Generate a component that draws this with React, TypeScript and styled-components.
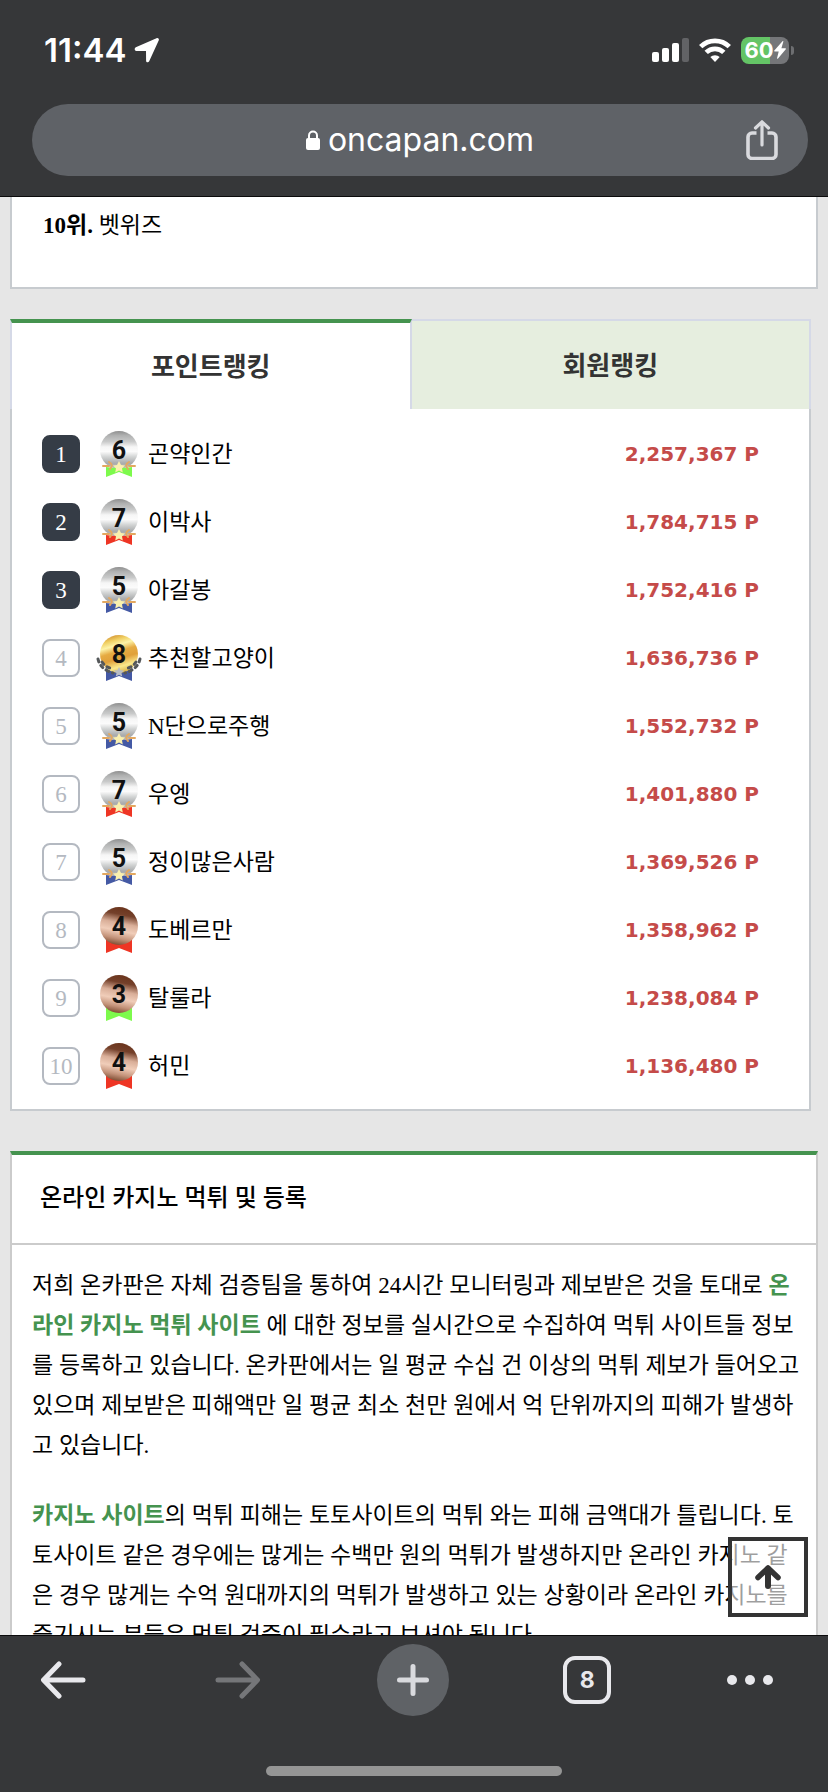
import React, { useState } from 'react';
import styled, { createGlobalStyle, css } from 'styled-components';

const serif = '"Liberation Serif", "Noto Sans CJK KR", serif';
const system = 'Inter, "Noto Sans CJK KR", sans-serif';

const GlobalStyle = createGlobalStyle`
  * { box-sizing: border-box; }
  body { margin: 0; background: #e6e6e6; color: #000; font-family: ${serif}; }
  button { border: 0; margin: 0; padding: 0; background: none; font: inherit; color: inherit; cursor: pointer; }
  h2, p, ol { margin: 0; padding: 0; }
  svg { display: block; flex: none; }
`;

const Screen = styled.div`
  display: flex;
  flex-direction: column;
  height: 100vh;
  overflow: hidden;
`;

const Header = styled.header`
  flex: none;
  background: #363739;
  border-bottom: 1px solid #0b0b0c;
  padding-bottom: 20px;
  color: #fff;
  font-family: ${system};
`;

const StatusBar = styled.div`
  display: flex;
  align-items: center;
  height: 104px;
  padding: 0 34px 4px 44px;
`;

const Clock = styled.time`
  font-size: 33px;
  font-weight: 600;
  line-height: 40px;
  margin-right: 8px;
`;

const StatusIcons = styled.div`
  display: flex;
  align-items: center;
  gap: 10px;
  margin-left: auto;
`;

const Battery = styled.div`
  display: flex;
  align-items: center;
  gap: 2px;
`;

const BatteryBody = styled.div`
  display: flex;
  align-items: center;
  justify-content: center;
  width: 48px;
  height: 27px;
  border-radius: 8px;
  background: linear-gradient(to right, #64c466 60%, #757679 60%);
  font-size: 22px;
  font-weight: 700;
  line-height: 27px;
`;

const BatteryCap = styled.div`
  width: 3px;
  height: 9px;
  border-radius: 0 4px 4px 0;
  background: #6d6e71;
`;

const AddressBar = styled.div`
  display: grid;
  grid-template-columns: 1fr auto 1fr;
  align-items: center;
  height: 72px;
  margin: 0 20px 0 32px;
  padding: 0 30px;
  border-radius: 36px;
  background: #5f6267;
`;

const Address = styled.button`
  grid-column: 2;
  display: flex;
  align-items: center;
  gap: 8px;
  font-size: 32px;
  line-height: 40px;
`;

const ShareButton = styled.button`
  justify-self: end;
`;

const Main = styled.main`
  position: relative;
  flex: 1;
  min-height: 0;
  overflow: hidden;
  padding: 0 10px;
`;

const SiteCard = styled.section`
  border: 2px solid #c7cbcf;
  border-top: 0;
  background: #fff;
  padding: 9px 32px 41px 31px;
  font-size: 23px;
  line-height: 40px;
`;

const Ranking = styled.section`
  margin: 30px 7px 40px 0;
`;

const TabList = styled.div`
  display: flex;
  height: 90px;
`;

const Tab = styled.button<{ $active: boolean }>`
  flex: 1;
  padding-bottom: 4px;
  border: 2px solid #d5d9e7;
  border-bottom: 0;
  font-size: 26px;
  font-weight: 700;
  color: #333;
  background: #e6eedf;
  ${({ $active }) =>
    $active
      ? css`
          background: #fff;
          border-top: 4px solid #45934f;
        `
      : css`
          border-left: 0;
        `}
`;

const RankList = styled.ol`
  list-style: none;
  border: 2px solid #c7cbcf;
  border-top: 0;
  background: #fff;
  padding: 11px 50px 9px 30px;
`;

const RankRow = styled.li`
  display: flex;
  align-items: center;
  height: 68px;
`;

const RankBadge = styled.span<{ $top: boolean }>`
  width: 38px;
  height: 38px;
  border-radius: 8px;
  border: 2px solid ${({ $top }) => ($top ? '#353c46' : '#b4b9c1')};
  background: ${({ $top }) => ($top ? '#353c46' : '#fff')};
  color: ${({ $top }) => ($top ? '#fff' : '#b4b9c1')};
  font-size: 23px;
  line-height: 36px;
  text-align: center;
  margin-right: 16px;
`;

const Member = styled.span`
  margin-left: 6px;
  padding-top: 2px;
  font-size: 23px;
  line-height: 40px;
`;

const Points = styled.span`
  margin-left: auto;
  color: #c54b49;
  font-family: "DejaVu Sans", sans-serif;
  font-size: 20px;
  font-weight: 700;
`;

const Article = styled.section`
  border: 2px solid #cbcbcb;
  border-top: 4px solid #45934f;
  background: #fff;
`;

const ArticleTitle = styled.h2`
  padding: 0 28px 2px;
  border-bottom: 2px solid #cbcbcb;
  font-size: 24px;
  font-weight: 500;
  line-height: 86px;
`;

const ArticleBody = styled.div`
  display: flex;
  flex-direction: column;
  gap: 30px;
  padding: 21px 16px 30px 20px;
  font-size: 23px;
  line-height: 40px;
`;

const Keyword = styled.a`
  color: #45934f;
  font-weight: 700;
  text-decoration: none;
`;

const ScrollTop = styled.button`
  position: absolute;
  right: 20px;
  bottom: 18px;
  display: flex;
  align-items: center;
  justify-content: center;
  width: 80px;
  height: 80px;
  border: 4px solid #333;
  background: rgba(255, 255, 255, 0.62);
`;

const Footer = styled.footer`
  flex: none;
  display: flex;
  flex-direction: column;
  align-items: center;
  background: #363739;
  border-top: 1px solid #0b0b0c;
  padding-bottom: 16px;
  color: #e8e8ec;
  font-family: ${system};
`;

const Toolbar = styled.nav`
  align-self: stretch;
  display: flex;
  justify-content: space-between;
  padding: 8px 54px 50px 27px;
`;

const ToolButton = styled.button<{ $filled?: boolean; $narrow?: boolean }>`
  display: flex;
  align-items: center;
  justify-content: center;
  width: ${({ $narrow }) => ($narrow ? 48 : 72)}px;
  height: 72px;
  border-radius: 36px;
  background: ${({ $filled }) => ($filled ? '#5f6266' : 'transparent')};
  &:disabled { color: #757679; }
`;

const TabCount = styled.span`
  width: 48px;
  height: 48px;
  border: 4px solid currentColor;
  border-radius: 12px;
  font-size: 23px;
  font-weight: 700;
  line-height: 41px;
  text-align: center;
`;

const HomeIndicator = styled.div`
  width: 296px;
  height: 10px;
  border-radius: 5px;
  background: #959595;
`;

type Metal = 'silver' | 'gold' | 'bronze';

const green = '#7dfa4c';
const red = '#ee3524';
const blue = '#4459a4';

const medals: Record<number, { metal: Metal; ribbon: string }> = {
  3: { metal: 'bronze', ribbon: green },
  4: { metal: 'bronze', ribbon: red },
  5: { metal: 'silver', ribbon: blue },
  6: { metal: 'silver', ribbon: green },
  7: { metal: 'silver', ribbon: red },
  8: { metal: 'gold', ribbon: blue },
};

const GradientDefs = styled.svg`
  position: absolute;
`;

const MedalGradients = () => (
  <GradientDefs width="0" height="0" aria-hidden="true">
    <defs>
      <linearGradient id="silver" x1="0" y1="0" x2="0" y2="1">
        <stop offset="0" stopColor="#8f8f8f" />
        <stop offset="0.12" stopColor="#b0b1b1" />
        <stop offset="0.28" stopColor="#c9caca" />
        <stop offset="0.42" stopColor="#f6f6f6" />
        <stop offset="0.54" stopColor="#fbfbfb" />
        <stop offset="0.68" stopColor="#d2d4d4" />
        <stop offset="0.85" stopColor="#a9abac" />
        <stop offset="1" stopColor="#c0c2c2" />
      </linearGradient>
      <linearGradient id="gold" x1="0.25" y1="0" x2="0.55" y2="1">
        <stop offset="0" stopColor="#cf8b2c" />
        <stop offset="0.16" stopColor="#f0cf62" />
        <stop offset="0.3" stopColor="#fdf3a8" />
        <stop offset="0.46" stopColor="#e6ab42" />
        <stop offset="0.64" stopColor="#e0a03a" />
        <stop offset="0.84" stopColor="#fbe98c" />
        <stop offset="1" stopColor="#d9b24c" />
      </linearGradient>
      <linearGradient id="bronze" x1="0.6" y1="0" x2="0.4" y2="1">
        <stop offset="0" stopColor="#6a341c" />
        <stop offset="0.2" stopColor="#74402a" />
        <stop offset="0.42" stopColor="#d9ae98" />
        <stop offset="0.62" stopColor="#f0cdb9" />
        <stop offset="0.82" stopColor="#c4937a" />
        <stop offset="1" stopColor="#7c4a30" />
      </linearGradient>
    </defs>
  </GradientDefs>
);

const Medal = ({ level }: { level: number }) => {
  const { metal, ribbon } = medals[level];
  return (
    <svg width="46" height="46" viewBox="0 0 46 46" role="img" aria-label={`레벨 ${level}`}>
      {metal !== 'silver' && <path d="M10 32h26v14l-13-5-13 5z" fill={ribbon} />}
      <circle cx="23" cy="19" r="19" fill={`url(#${metal})`} />
      {metal === 'silver' && (
        <>
          <path d="M10 36q6 1 13 1t13-1v10l-13-5-13 5z" fill={ribbon} />
          <g fill="none" stroke="#e3a860" strokeWidth="2" strokeLinecap="round">
            <path d="M13 31q5 3 1 7M33 31q-5 3-1 7" />
            <path d="M7 35h6M33 35h6" />
          </g>
          <path d="M23 30l2 4 4 .5-3 3 .8 4-3.800-2-3.800 2 .8-4-3-3 4-.5z" fill="#faf0ae" />
        </>
      )}
      {metal === 'gold' && (
        <>
          <g fill="none" stroke="#55585a" strokeWidth="3" strokeLinecap="round" strokeDasharray="3 4">
            <path d="M2 24Q4 34 17 38M44 24Q42 34 29 38" />
            <path d="M6 27Q9 32 17 34M40 27Q37 32 29 34" />
          </g>
          <path d="M23 32l1.600 3.200 3.400.4-2.500 2.400.7 3.500-3.200-1.700-3.200 1.700.7-3.500-2.500-2.400 3.400-.4z" fill="#b9bdc4" />
        </>
      )}
      <text x="23" y="28" textAnchor="middle" fontFamily="Roboto, sans-serif" fontSize="25" fontWeight="700" fill="#111">
        {level}
      </text>
    </svg>
  );
};

const LocationIcon = () => (
  <svg width="26" height="26" viewBox="0 0 26 26">
    <path d="M22.500 1.200 1.800 10.300c-1.700.8-1.300 3.700.5 3.700l9.700.1.100 9.600c0 1.900 2.300 2.200 3.100.6L24.800 3.300c.6-1.500-.8-2.700-2.300-2.100z" fill="#fff" />
  </svg>
);

const SignalIcon = () => (
  <svg width="37" height="24" viewBox="0 0 37 24" fill="#fff">
    <rect x="0" y="14" width="7" height="10" rx="2" />
    <rect x="10" y="10" width="7" height="14" rx="2" />
    <rect x="20" y="5" width="7" height="19" rx="2" />
    <rect x="30" y="0" width="7" height="24" rx="2" fill="#626366" />
  </svg>
);

const WifiIcon = () => (
  <svg width="32" height="24" viewBox="0 0 32 24">
    <g fill="none" stroke="#fff" strokeWidth="4.800">
      <path d="M1.700 8.600a20.500 20.500 0 0 1 28.600 0" />
      <path d="M7.200 14.400a12.600 12.600 0 0 1 17.600 0" />
    </g>
    <path d="M11.300 19.100a6.700 6.700 0 0 1 9.400 0L16 24z" fill="#fff" />
  </svg>
);

const BoltIcon = () => (
  <svg width="12" height="18" viewBox="0 0 12 18">
    <path d="M8.500.3.300 9.600c-.3.400 0 .8.400.8h4L3.100 17c-.2.700.5 1 .9.500l7.800-9.300c.3-.4 0-.9-.4-.9h-4L9.300.8C9.500.2 8.900-.1 8.500.3z" fill="#fff" />
  </svg>
);

const LockIcon = () => (
  <svg width="14" height="20" viewBox="0 0 14 20">
    <rect x="0" y="8" width="14" height="12" rx="2" fill="#fff" />
    <path d="M3 9V5.500a4 4 0 0 1 8 0V9" fill="none" stroke="#fff" strokeWidth="2" />
  </svg>
);

const ShareIcon = () => (
  <svg width="32" height="40" viewBox="0 0 32 40" fill="none" stroke="#d9dade" strokeLinecap="round">
    <path d="M10.500 13H6a4 4 0 0 0-4 4v17.500a4 4 0 0 0 4 4h20a4 4 0 0 0 4-4V17a4 4 0 0 0-4-4h-4.500" strokeWidth="3.600" strokeLinecap="butt" />
    <path d="M16 25V2M9.500 8 16 1.800 22.500 8" strokeWidth="3.200" strokeLinejoin="round" />
  </svg>
);

const ArrowIcon = ({ forward }: { forward?: boolean }) => (
  <svg width="46" height="38" viewBox="0 0 46 38" fill="none" stroke="currentColor" strokeWidth="5" strokeLinecap="round" strokeLinejoin="round">
    <path d={forward ? 'M3 19h39M27 3l15.500 16L27 35' : 'M43 19H4M19 3 3.500 19 19 35'} />
  </svg>
);

const PlusIcon = () => (
  <svg width="32" height="32" viewBox="0 0 32 32" fill="none" stroke="#d9dade" strokeWidth="5" strokeLinecap="round">
    <path d="M16 2.500v27M2.500 16h27" />
  </svg>
);

const MoreIcon = () => (
  <svg width="46" height="10" viewBox="0 0 46 10" fill="currentColor">
    <circle cx="5" cy="5" r="5" />
    <circle cx="23" cy="5" r="5" />
    <circle cx="41" cy="5" r="5" />
  </svg>
);

const UpIcon = () => (
  <svg width="26" height="24" viewBox="0 0 26 24" fill="none" stroke="#333" strokeLinecap="round">
    <path d="M3 12.500 13 3l10 9.500" strokeWidth="5.500" strokeLinejoin="round" />
    <path d="M13 4v17" strokeWidth="6" />
  </svg>
);

const members: { name: string; level: number; points: string }[] = [
  { name: '곤약인간', level: 6, points: '2,257,367' },
  { name: '이박사', level: 7, points: '1,784,715' },
  { name: '아갈봉', level: 5, points: '1,752,416' },
  { name: '추천할고양이', level: 8, points: '1,636,736' },
  { name: 'N단으로주행', level: 5, points: '1,552,732' },
  { name: '우엥', level: 7, points: '1,401,880' },
  { name: '정이많은사람', level: 5, points: '1,369,526' },
  { name: '도베르만', level: 4, points: '1,358,962' },
  { name: '탈룰라', level: 3, points: '1,238,084' },
  { name: '허민', level: 4, points: '1,136,480' },
];

const tabs = ['포인트랭킹', '회원랭킹'];

export default function App() {
  const [activeTab, setActiveTab] = useState(0);

  return (
    <Screen>
      <GlobalStyle />
      <MedalGradients />
      <Header>
        <StatusBar>
          <Clock>11:44</Clock>
          <LocationIcon />
          <StatusIcons>
            <SignalIcon />
            <WifiIcon />
            <Battery>
              <BatteryBody>
                60
                <BoltIcon />
              </BatteryBody>
              <BatteryCap />
            </Battery>
          </StatusIcons>
        </StatusBar>
        <AddressBar>
          <Address type="button">
            <LockIcon />
            oncapan.com
          </Address>
          <ShareButton type="button" aria-label="공유">
            <ShareIcon />
          </ShareButton>
        </AddressBar>
      </Header>

      <Main>
        <SiteCard>
          <p>
            <strong>10위.</strong> 벳위즈
          </p>
        </SiteCard>

        <Ranking>
          <TabList role="tablist">
            {tabs.map((label, i) => (
              <Tab key={label} type="button" role="tab" aria-selected={i === activeTab} $active={i === activeTab} onClick={() => setActiveTab(i)}>
                {label}
              </Tab>
            ))}
          </TabList>
          <RankList>
            {members.map((m, i) => (
              <RankRow key={m.name}>
                <RankBadge $top={i < 3}>{i + 1}</RankBadge>
                <Medal level={m.level} />
                <Member>{m.name}</Member>
                <Points>{m.points} P</Points>
              </RankRow>
            ))}
          </RankList>
        </Ranking>

        <Article>
          <ArticleTitle>온라인 카지노 먹튀 및 등록</ArticleTitle>
          <ArticleBody>
            <p>
              저희 온카판은 자체 검증팀을 통하여 24시간 모니터링과 제보받은 것을 토대로{' '}
              <Keyword href="#casino">온라인 카지노 먹튀 사이트</Keyword> 에 대한 정보를 실시간으로 수집하여 먹튀 사이트들 정보를
              등록하고 있습니다. 온카판에서는 일 평균 수십 건 이상의 먹튀 제보가 들어오고 있으며 제보받은 피해액만 일 평균 최소
              천만 원에서 억 단위까지의 피해가 발생하고 있습니다.
            </p>
            <p>
              <Keyword href="#site">카지노 사이트</Keyword>의 먹튀 피해는 토토사이트의 먹튀 와는 피해 금액대가 틀립니다.
              토토사이트 같은 경우에는 많게는 수백만 원의 먹튀가 발생하지만 온라인 카지노 같은 경우 많게는 수억 원대까지의 먹튀가
              발생하고 있는 상황이라 온라인 카지노를 즐기시는 분들은 먹튀 검증이 필수라고 보셔야 됩니다.
            </p>
          </ArticleBody>
        </Article>

        <ScrollTop type="button" aria-label="맨 위로">
          <UpIcon />
        </ScrollTop>
      </Main>

      <Footer>
        <Toolbar>
          <ToolButton type="button" aria-label="뒤로">
            <ArrowIcon />
          </ToolButton>
          <ToolButton type="button" aria-label="앞으로" disabled>
            <ArrowIcon forward />
          </ToolButton>
          <ToolButton type="button" aria-label="새 탭" $filled>
            <PlusIcon />
          </ToolButton>
          <ToolButton type="button">
            <TabCount>8</TabCount>
          </ToolButton>
          <ToolButton type="button" aria-label="더보기" $narrow>
            <MoreIcon />
          </ToolButton>
        </Toolbar>
        <HomeIndicator />
      </Footer>
    </Screen>
  );
}
